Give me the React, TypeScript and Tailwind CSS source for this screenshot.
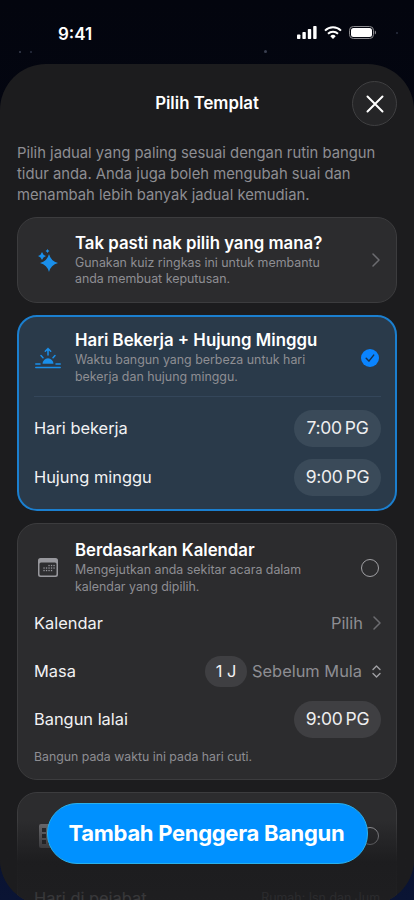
import React from "react";

const font = { fontFamily: "Inter, 'Noto Sans', sans-serif" };

function Star({ cx, cy, r, w }: { cx: number; cy: number; r: number; w: number }) {
  const d = `M${cx} ${cy - r}Q${cx + w * 0.3} ${cy - w * 0.3} ${cx + r} ${cy}Q${cx + w * 0.3} ${cy + w * 0.3} ${cx} ${cy + r}Q${cx - w * 0.3} ${cy + w * 0.3} ${cx - r} ${cy}Q${cx - w * 0.3} ${cy - w * 0.3} ${cx} ${cy - r}Z`;
  return <path d={d} fill="#1a8fea" />;
}

function Sparkles() {
  return (
    <svg width="20" height="23" viewBox="0 0 20 23">
      <Star cx={11} cy={14} r={9} w={6} />
      <Star cx={4} cy={7} r={4} w={3} />
      <Star cx={9.5} cy={2} r={2} w={2} />
    </svg>
  );
}

function Sunrise() {
  return (
    <svg width="26" height="22" viewBox="0 0 26 22" fill="none" stroke="#1a8fea" strokeWidth="1.5" strokeLinecap="round">
      <path d="M0.8 20.5H25.2" />
      <path d="M0.8 17H5M21 17H25.2" />
      <path d="M7.5 16.8a5.5 5.5 0 0 1 11 0z" fill="#1a8fea" stroke="none" />
      <path d="M13 8V1.5M10.3 4.2 13 1.5l2.7 2.7" />
      <path d="M6 8.5l2 2.2M20 8.5l-2 2.2" />
    </svg>
  );
}

function CalendarIcon({ color = "#98989d" }: { color?: string }) {
  const dots: [number, number][] = [];
  for (const [x, y] of [[11, 7.5], [13.5, 7.5], [16, 7.5], [6, 10], [8.5, 10], [11, 10], [13.5, 10], [16, 10], [6, 12.5], [8.5, 12.5], [11, 12.5], [13.5, 12.5]]) dots.push([x, y]);
  return (
    <svg width="20" height="19" viewBox="0 0 20 19" style={{ color }}>
      <path d="M2.5 0h15A2.5 2.5 0 0 1 20 2.5v14a2.5 2.5 0 0 1-2.5 2.5h-15A2.5 2.5 0 0 1 0 16.5v-14A2.5 2.5 0 0 1 2.5 0Z" fill="currentColor" />
      <rect x="1.5" y="4.5" width="17" height="13" rx="1.5" fill="#2e2e30" />
      {dots.map(([x, y], i) => (
        <rect key={i} x={x - 0.6} y={y - 0.6} width="1.3" height="1.3" fill="currentColor" />
      ))}
    </svg>
  );
}

function OfficeIcon() {
  return (
    <svg width="24" height="24" viewBox="0 0 24 24">
      <rect width="24" height="24" rx="2" fill="#6e6e72" />
      {[4, 10, 16].map((y) => (
        <g key={y}>
          <rect x="3" y={y} width="4" height="4" fill="#2a2a2c" />
          <rect x="9" y={y} width="4" height="4" fill="#2a2a2c" />
        </g>
      ))}
    </svg>
  );
}

function Chevron({ color = "#6c6c70" }: { color?: string }) {
  return (
    <svg width="8" height="14" viewBox="0 0 8 14" fill="none" stroke={color} strokeWidth="1.5" strokeLinecap="round" strokeLinejoin="round">
      <path d="M1 1l6 6-6 6" />
    </svg>
  );
}

function Time({ value, bg }: { value: string; bg: string }) {
  return <div className={`flex h-[37px] w-[87px] items-center justify-center rounded-full text-[17.5px] tracking-[-0.3px] text-[#eeeeef] ${bg}`}>{value}<span className="ml-[3px]">PG</span></div>;
}

function Head({ icon, title, desc, trailing }: { icon: React.ReactNode; title: string; desc: React.ReactNode; trailing: React.ReactNode }) {
  return (
    <div className="flex items-center">
      <div className="flex w-[57px] shrink-0 justify-center pl-[2px]">{icon}</div>
      <div className="min-w-0 flex-1">
        <div className="text-[16.8px] font-semibold leading-[21px] text-white">{title}</div>
        <div className="mt-[1px] text-[12.4px] leading-[16.5px] text-[#8e8e93]">{desc}</div>
      </div>
      {trailing}
    </div>
  );
}

export default function App() {
  return (
    <div className="relative h-[900px] w-[414px] overflow-hidden bg-gradient-to-b from-[#03050e] via-[#050818] to-[#0a1434]" style={font}>
      <span className="absolute left-[19px] top-[51px] h-[2px] w-[2px] rounded-full bg-[#3a3f50]" />
      <span className="absolute left-[30px] top-[51px] h-[2px] w-[2px] rounded-full bg-[#2a2f40]" />
      <span className="absolute left-[264px] top-[50px] h-[3px] w-[3px] rounded-full bg-[#3a3f50]" />
      <span className="absolute left-[396px] top-[32px] h-[2px] w-[2px] rounded-full bg-[#2a2f40]" />

      <div className="flex h-[64px] items-start justify-between pl-[58px] pr-[38px] pt-[23px]">
        <span className="text-[17px] font-semibold leading-[22px] text-white">9:41</span>
        <div className="flex items-center gap-[7px] pt-[3px]">
          <svg width="20" height="13" viewBox="0 0 20 13" fill="#fff">
            <rect x="0" y="8.5" width="3.4" height="4.5" rx="0.8" />
            <rect x="5.4" y="6" width="3.4" height="7" rx="0.8" />
            <rect x="10.8" y="3" width="3.4" height="10" rx="0.8" />
            <rect x="16.2" y="0" width="3.4" height="13" rx="0.8" />
          </svg>
          <svg width="18" height="13" viewBox="0 0 18 13" fill="none" stroke="#fff" strokeWidth="2">
            <path d="M1 4.6a11.5 11.5 0 0 1 16 0" />
            <path d="M4 7.7a7.2 7.2 0 0 1 10 0" />
            <path d="M9 13 6.3 10.2a3.8 3.8 0 0 1 5.4 0Z" fill="#fff" stroke="none" />
          </svg>
          <svg width="27" height="13" viewBox="0 0 27 13">
            <rect x="0.5" y="0.5" width="24" height="12" rx="3.8" fill="none" stroke="#8a8a8e" />
            <rect x="2" y="2" width="21" height="9" rx="2.5" fill="#fff" />
            <path d="M25.8 4.5v4a2.2 2.2 0 0 0 0-4Z" fill="#8a8a8e" />
          </svg>
        </div>
      </div>

      <div className="relative h-[841px] overflow-hidden rounded-[46px] bg-[#1c1c1e] pt-[17px]">
        <div className="grid grid-cols-[45px_1fr_45px] items-center px-[17px]">
          <span />
          <h1 className="text-center text-[16.8px] font-semibold text-white">Pilih Templat</h1>
          <button className="flex h-[45px] w-[45px] items-center justify-center rounded-full border border-[#404042] bg-[#252527]">
            <svg width="18" height="18" viewBox="0 0 18 18" stroke="#fff" strokeWidth="2" strokeLinecap="round">
              <path d="M1.5 1.5l15 15M16.5 1.5l-15 15" />
            </svg>
          </button>
        </div>

        <p className="mt-[17px] whitespace-nowrap px-[17px] text-[14.8px] leading-[21px] text-[#8e8e93]">
          Pilih jadual yang paling sesuai dengan rutin bangun
          <br />
          tidur anda. Anda juga boleh mengubah suai dan
          <br />
          menambah lebih banyak jadual kemudian.
        </p>

        <div className="mt-[11px] flex flex-col gap-[12px] px-[17px]">
          <div className="flex h-[86px] flex-col justify-center rounded-[20px] border border-[#3c3c3e] bg-[#2c2c2e] pr-[16px]">
            <Head
              icon={<Sparkles />}
              title="Tak pasti nak pilih yang mana?"
              desc={<>Gunakan kuiz ringkas ini untuk membantu<br />anda membuat keputusan.</>}
              trailing={<Chevron />}
            />
          </div>

          <div className="h-[196px] rounded-[20px] border-2 border-[#1b7fcf] bg-[#2a3a4a] pl-[15px] pr-[14px] pt-[13px]">
            <div className="-ml-[16px]">
              <Head
                icon={<Sunrise />}
                title="Hari Bekerja + Hujung Minggu"
                desc={<>Waktu bangun yang berbeza untuk hari<br />bekerja dan hujung minggu.</>}
                trailing={
                  <svg width="18" height="18" viewBox="0 0 18 18" className="mr-[2px] shrink-0">
                    <circle cx="9" cy="9" r="9" fill="#0a84ff" />
                    <path d="M5.2 9.3l2.7 2.8 4.8-6" fill="none" stroke="#16324f" strokeWidth="1.5" strokeLinecap="round" strokeLinejoin="round" />
                  </svg>
                }
              />
            </div>
            <div className="mt-[11px] h-px bg-[#34465a]" />
            <div className="mt-[13px] flex items-center justify-between text-[16.4px] text-[#f2f2f4]">
              <span>Hari bekerja</span>
              <Time value="7:00" bg="bg-[#3a4a59]" />
            </div>
            <div className="mt-[12px] flex items-center justify-between text-[16.4px] text-[#f2f2f4]">
              <span>Hujung minggu</span>
              <Time value="9:00" bg="bg-[#3a4a59]" />
            </div>
          </div>

          <div className="h-[257px] rounded-[20px] border border-[#3c3c3e] bg-[#2c2c2e] pl-[16px] pr-[15px] pt-[16px]">
            <div className="-ml-[16px]">
              <Head
                icon={<CalendarIcon />}
                title="Berdasarkan Kalendar"
                desc={<>Mengejutkan anda sekitar acara dalam<br />kalendar yang dipilih.</>}
                trailing={<span className="mr-[2px] h-[18px] w-[18px] shrink-0 rounded-full border-[1.5px] border-[#a0a0a4]" />}
              />
            </div>
            <div className="mt-[4px] flex h-[48px] items-center justify-between text-[16.4px] text-[#f2f2f4]">
              <span>Kalendar</span>
              <span className="flex items-center gap-[10px] text-[#8e8e93]">Pilih <Chevron /></span>
            </div>
            <div className="flex h-[48px] items-center justify-between text-[16.4px] text-[#f2f2f4]">
              <span>Masa</span>
              <span className="flex items-center text-[#8e8e93]">
                <span className="mr-[5px] flex h-[31px] w-[42px] items-center justify-center rounded-full bg-[#3f3f42] text-[#f2f2f4]">1 J</span>
                Sebelum Mula
                <svg width="9" height="13" viewBox="0 0 9 13" fill="none" stroke="#a0a0a4" strokeWidth="1.4" strokeLinecap="round" strokeLinejoin="round" className="ml-[10px]">
                  <path d="M1 4.5 4.5 1 8 4.5M1 8.5 4.5 12 8 8.5" />
                </svg>
              </span>
            </div>
            <div className="flex h-[48px] items-center justify-between text-[16.4px] text-[#f2f2f4]">
              <span>Bangun lalai</span>
              <Time value="9:00" bg="bg-[#3f3f42]" />
            </div>
            <p className="mt-[5px] text-[12.3px] text-[#8e8e93]">Bangun pada waktu ini pada hari cuti.</p>
          </div>

          <div className="h-[200px] rounded-[20px] border border-[#3c3c3e] bg-[#2c2c2e] px-[16px] pt-[31px]">
            <div className="flex items-center justify-between">
              <div className="pl-[5px]"><OfficeIcon /></div>
              <span className="mr-[1px] h-[18px] w-[18px] rounded-full border-[1.5px] border-[#a0a0a4]" />
            </div>
            <div className="mt-[38px] flex items-center justify-between text-[16.4px] text-[#f2f2f4]">
              <span>Hari di pejabat</span>
              <span className="text-[12.4px] text-[#8e8e93]">Rumah: Isn dan Jum</span>
            </div>
          </div>
        </div>

        <div className="pointer-events-none absolute inset-x-0 bottom-0 h-[85px] bg-gradient-to-b from-[#1c1c1e]/0 via-[#1c1c1e]/95 to-[#1c1c1e]/85" />
      </div>

      <button className="absolute left-[47px] top-[803px] flex h-[61px] w-[321px] items-center justify-center rounded-[30px] border border-[#2ab0ea] bg-[#0091ff] pr-[2px] text-[22px] font-bold tracking-[-0.3px] text-white">
        Tambah Penggera Bangun
      </button>
    </div>
  );
}
